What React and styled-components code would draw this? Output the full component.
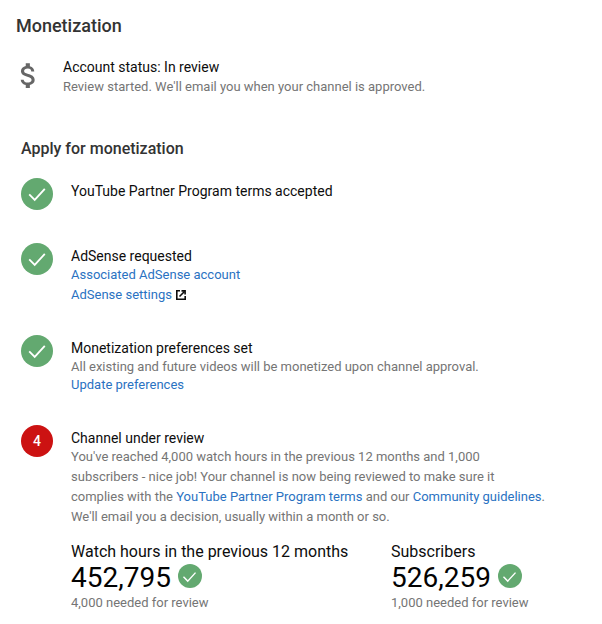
import React from "react";
import styled, { createGlobalStyle } from "styled-components";

const Global = createGlobalStyle`
  html, body { margin: 0; padding: 0; background: #fff; }
  body { font-family: Roboto, "Liberation Sans", sans-serif; }
`;

const Page = styled.div`
  width: 602px;
  height: 624px;
  overflow: hidden;
  padding: 15px 0 0 16px;
  box-sizing: border-box;
`;

const Title = styled.h1`
  margin: 0;
  font-size: 18px;
  line-height: 22px;
  font-weight: 500;
  color: #333;
`;

const Status = styled.div`
  display: flex;
  margin-top: 20px;
`;

const DollarBox = styled.div`
  width: 47px;
  height: 38px;
  flex: none;
  color: #666;
`;

const DollarIcon = styled.svg`
  display: block;
  margin: 2px 0 0 -4px;
`;

const Heading = styled.h2`
  margin: 42px 0 0 5px;
  font-size: 16px;
  line-height: 22px;
  font-weight: 500;
  color: #333;
`;

const Steps = styled.div`
  margin: 18px 0 0 5px;
  display: flex;
  flex-direction: column;
`;

const Step = styled.div`
  display: flex;
  min-height: ${(p) => p.$h}px;
`;

const Badge = styled.div`
  width: 32px;
  height: 32px;
  flex: none;
  border-radius: 50%;
  background: ${(p) => p.$bg};
  color: #fff;
  font-size: 14px;
  font-weight: 500;
  display: flex;
  align-items: center;
  justify-content: center;
  margin-right: 18px;
`;

const Body = styled.div`
  display: flex;
  flex-direction: column;
  padding-top: ${(p) => p.$pt || 0}px;
`;

const Name = styled.div`
  font-size: 14px;
  line-height: 20px;
  color: #0d0d0d;
`;

const Muted = styled.div`
  font-size: 13px;
  line-height: 18px;
  margin-top: ${(p) => p.$mt || 0}px;
  color: #757575;
`;

const Para = styled.p`
  margin: -1px 0 0;
  width: 476px;
  font-size: 13px;
  line-height: 20px;
  color: #757575;
`;

const Link = styled.a`
  font-size: 13px;
  line-height: ${(p) => p.$lh || 18}px;
  color: #2a72c2;
  text-decoration: none;
  display: flex;
  align-items: center;
`;

const InlineLink = styled.a`
  color: #2a72c2;
  text-decoration: none;
`;

const Metrics = styled.div`
  display: flex;
  margin-top: 15px;
`;

const Metric = styled.div`
  width: ${(p) => p.$w}px;
  flex: none;
`;

const MetricLabel = styled.div`
  font-size: 16px;
  line-height: 20px;
  color: #0d0d0d;
`;

const MetricRow = styled.div`
  display: flex;
  align-items: center;
  height: 34px;
  margin-top: -1px;
`;

const MetricValue = styled.div`
  font-size: 28px;
  line-height: 34px;
  color: #030303;
  margin-right: 7px;
`;

const MetricBadge = styled.div`
  width: 24px;
  height: 24px;
  margin-bottom: 4px;
  border-radius: 50%;
  background: #63a970;
  display: flex;
  align-items: center;
  justify-content: center;
`;

const ExternalIcon = styled.svg`
  margin-left: 4px;
`;

const Check = ({ size }) => (
  <svg width={size} height={size} viewBox="0 0 24 24" fill="none" stroke="#fff" strokeWidth="2">
    <path d="M3.5 12.5 L9.5 18.5 L20.5 6.5" />
  </svg>
);

const Dollar = () => (
  <DollarIcon width="33" height="33" viewBox="0 0 24 24" fill="currentColor">
    <path d="M11.8 10.9c-2.27-.59-3-1.2-3-2.15 0-1.09 1.01-1.85 2.7-1.85 1.78 0 2.44.85 2.5 2.1h2.21c-.07-1.72-1.12-3.3-3.21-3.81V3h-3v2.16c-1.94.42-3.5 1.68-3.5 3.61 0 2.31 1.91 3.46 4.7 4.13 2.5.6 3 1.48 3 2.41 0 .69-.49 1.79-2.7 1.79-2.06 0-2.87-.92-2.98-2.1h-2.2c.12 2.19 1.76 3.42 3.68 3.83V21h3v-2.15c1.95-.37 3.5-1.5 3.5-3.55 0-2.84-2.43-3.81-4.7-4.4z" />
  </DollarIcon>
);

const External = () => (
  <ExternalIcon width="10" height="10" viewBox="0 0 10 10" fill="none" stroke="#0d0d0d" strokeWidth="1.6">
    <path d="M4 .8H.8v8.4h8.4V6" />
    <path d="M3.5 6.5 L8.5 1.5" />
    <path d="M5.5 .9H9.1V4.5" />
  </ExternalIcon>
);

const Done = () => (
  <Badge $bg="#63a970"><Check size={22} /></Badge>
);

const MetricBlock = ({ w, label, value, need }) => (
  <Metric $w={w}>
    <MetricLabel>{label}</MetricLabel>
    <MetricRow>
      <MetricValue>{value}</MetricValue>
      <MetricBadge><Check size={17} /></MetricBadge>
    </MetricRow>
    <Muted $mt={-1}>{need}</Muted>
  </Metric>
);

export default function App() {
  return (
    <Page>
      <Global />
      <Title>Monetization</Title>
      <Status>
        <DollarBox><Dollar /></DollarBox>
        <Body>
          <Name>Account status: In review</Name>
          <Muted $mt={1}>Review started. We'll email you when your channel is approved.</Muted>
        </Body>
      </Status>
      <Heading>Apply for monetization</Heading>
      <Steps>
        <Step $h={65}>
          <Done />
          <Body $pt={3}>
            <Name>YouTube Partner Program terms accepted</Name>
          </Body>
        </Step>
        <Step $h={92}>
          <Done />
          <Body $pt={3}>
            <Name>AdSense requested</Name>
            <Link>Associated AdSense account</Link>
            <Link $lh={22}>AdSense settings<External /></Link>
          </Body>
        </Step>
        <Step $h={90}>
          <Done />
          <Body $pt={3}>
            <Name>Monetization preferences set</Name>
            <Muted>All existing and future videos will be monetized upon channel approval.</Muted>
            <Link>Update preferences</Link>
          </Body>
        </Step>
        <Step $h={190}>
          <Badge $bg="#cc1212">4</Badge>
          <Body $pt={3}>
            <Name>Channel under review</Name>
            <Para>
              You've reached 4,000 watch hours in the previous 12 months and 1,000 subscribers - nice job! Your channel is now being reviewed to make sure it complies with the <InlineLink>YouTube Partner Program terms</InlineLink> and our <InlineLink>Community guidelines</InlineLink>. We'll email you a decision, usually within a month or so.
            </Para>
            <Metrics>
              <MetricBlock w={320} label="Watch hours in the previous 12 months" value="452,795" need="4,000 needed for review" />
              <MetricBlock w={160} label="Subscribers" value="526,259" need="1,000 needed for review" />
            </Metrics>
          </Body>
        </Step>
      </Steps>
    </Page>
  );
}
